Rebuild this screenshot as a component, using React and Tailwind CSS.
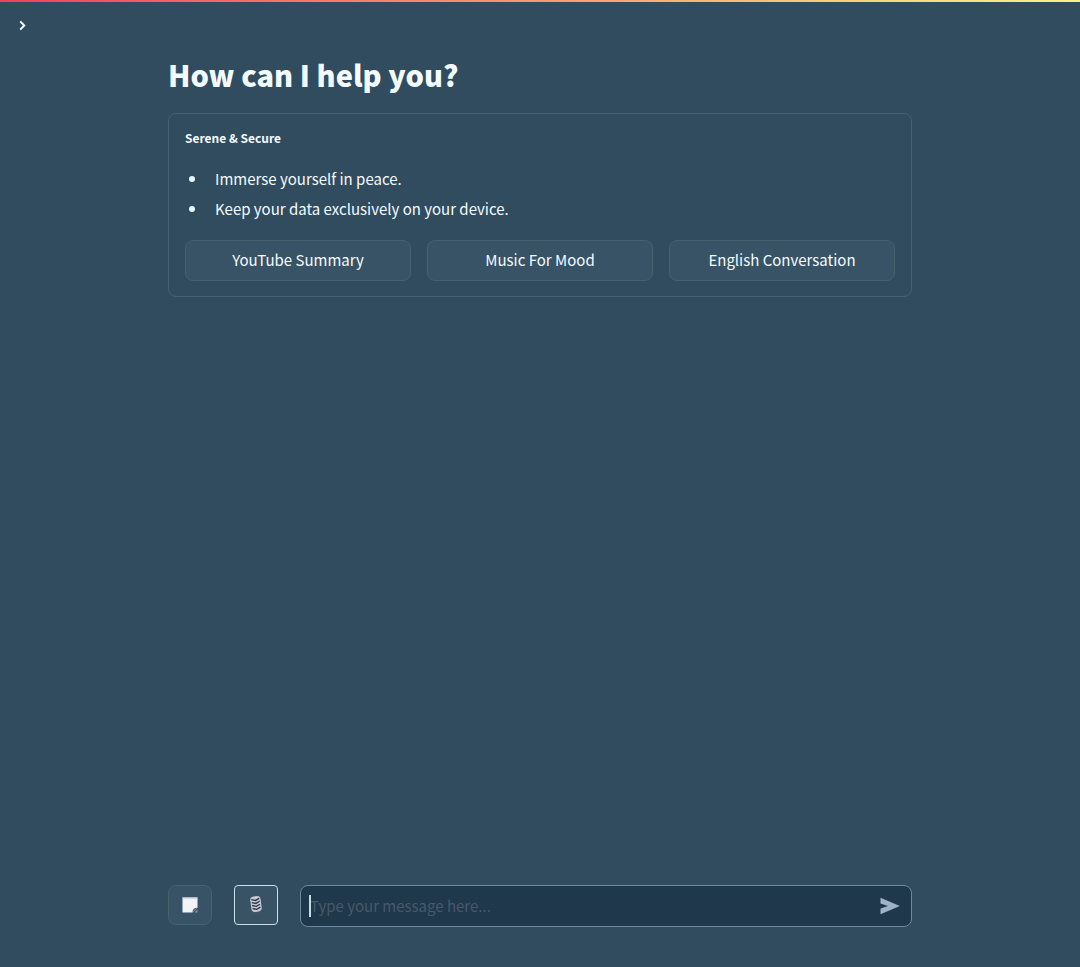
const actions = ["YouTube Summary", "Music For Mood", "English Conversation"];
const benefits = ["Immerse yourself in peace.", "Keep your data exclusively on your device."];

function NoteIcon() {
  return (
    <svg viewBox="0 0 16 16" className="h-4 w-4" aria-hidden="true">
      <path d="M0.5 0.5h15v10l-5 5H0.5z" fill="#f1f4f7" />
      <path d="M0.5 0.5h15v1.2H0.5z" fill="#c8d0d6" />
      <path d="M15.5 10.500L10.500 15.500C10.300 12.300 12.300 10.700 15.500 10.500z" fill="#63666a" />
      <path d="M15.500 12.500v3h-3z" fill="#8d989f" />
    </svg>
  );
}

function MicIcon() {
  return (
    <svg viewBox="0 0 16 20" className="h-5 w-4" aria-hidden="true">
      <path d="M4.500 16h7.500l1 2.500H3.500z" fill="#46535f" />
      <g transform="rotate(-8 8 9)">
        <rect x="2.800" y="1.200" width="10.400" height="15.600" rx="3.800" fill="#c3c9d6" />
        <path
          d="M4 4l4 1.400 4-1.600M4 7l4 1.400 4-1.600M4 10l4 1.400 4-1.600M4 13l4 1.400 4-1.600"
          fill="none"
          stroke="#343a48"
          strokeWidth="1.400"
        />
      </g>
    </svg>
  );
}

export default function App() {
  return (
    <div className="flex min-h-screen flex-col bg-[#304c5e] font-['Noto_Sans_CJK_SC',sans-serif] text-[#f3fbff]">
      <div className="h-[2px] bg-linear-to-r from-[#f03f5c] via-[#f59a70] to-[#f5f58a]" />
      <header className="flex px-4 pt-4">
        <button type="button" aria-label="Open sidebar" className="flex h-4 w-4 items-center justify-center">
          <svg viewBox="0 0 16 16" className="h-4 w-4" aria-hidden="true">
            <path d="M4.200 3.400l4.100 4.100-4.100 4.100" fill="none" stroke="#f3fbff" strokeWidth="2" />
          </svg>
        </button>
      </header>

      <main className="mx-auto w-full max-w-[776px] px-4 pt-5">
        <h1 className="text-[29px] leading-10 font-black">How can I help you?</h1>
        <section className="mt-[19px] rounded-lg border border-[#48606f] px-4 pt-3 pb-[15px]">
          <h2 className="text-[12px] leading-6 font-bold">Serene &amp; Secure</h2>
          <ul className="mt-[14px] text-[15px] leading-[30px]">
            {benefits.map((benefit) => (
              <li
                key={benefit}
                className="flex items-center gap-5 pl-1 before:h-[6px] before:w-[6px] before:rounded-full before:bg-[#e6f6ff]"
              >
                {benefit}
              </li>
            ))}
          </ul>
          <div className="mt-4 grid grid-cols-3 gap-4">
            {actions.map((label) => (
              <button
                key={label}
                type="button"
                className="h-[41px] rounded-lg border border-[#49616f] bg-[#385365] text-[15px]"
              >
                {label}
              </button>
            ))}
          </div>
        </section>
      </main>

      <form
        className="mx-auto mt-auto flex w-full max-w-[776px] items-start gap-[22px] px-4 pb-10"
        onSubmit={(event) => event.preventDefault()}
      >
        <button
          type="button"
          aria-label="New note"
          className="flex h-10 w-11 items-center justify-center rounded-lg border border-[#49616f] bg-[#385365]"
        >
          <NoteIcon />
        </button>
        <button
          type="button"
          aria-label="Record voice"
          className="flex h-10 w-11 items-center justify-center rounded-[4px] border border-[#c9e0ea] bg-[#385365]"
        >
          <MicIcon />
        </button>
        <div className="relative flex h-[42px] flex-1 items-center rounded-lg border border-[#6d8a9c] bg-[#1f384c] pr-[11px] pl-2">
          <span className="absolute left-2 h-[22px] w-[2px] bg-[#c5dcea]" />
          <input
            type="text"
            aria-label="Message"
            placeholder="Type your message here..."
            className="min-w-0 flex-1 bg-transparent pl-px text-[15px] outline-none placeholder:text-[#48596b]"
          />
          <button type="submit" aria-label="Send" className="flex h-5 w-5 items-center justify-center">
            <svg viewBox="0 0 20 20" className="h-5 w-5" aria-hidden="true">
              <path d="M0.500 1.800L19.800 10L0.500 18.200V12.500L8 10L0.500 7.500Z" fill="#9fb3c8" />
            </svg>
          </button>
        </div>
      </form>
    </div>
  );
}
